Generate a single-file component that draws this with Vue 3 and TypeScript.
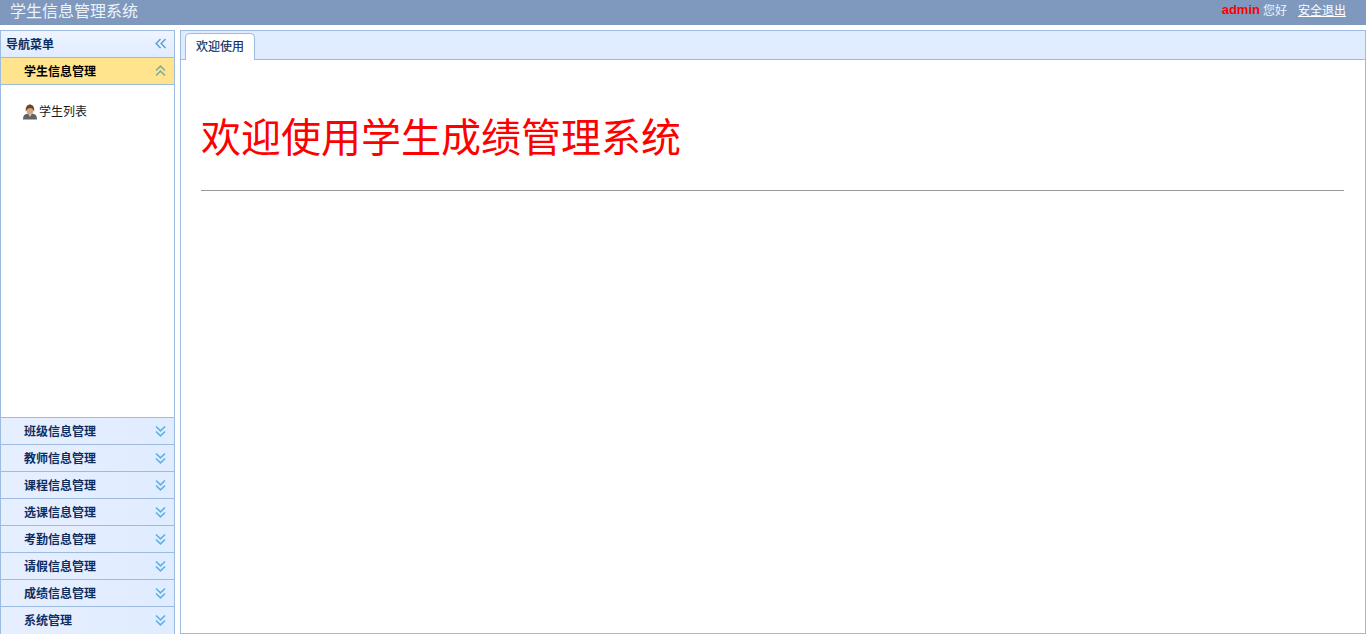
<script setup lang="ts">
const collapsed: string[] = ['班级信息管理', '教师信息管理', '课程信息管理', '选课信息管理', '考勤信息管理', '请假信息管理', '成绩信息管理', '系统管理']
</script>

<template>
  <div class="page">
    <header class="top">
      <div class="brand">学生信息管理系统</div>
      <div class="user">
        <b class="name">admin</b>
        <span class="hello">您好</span>
        <a class="logout">安全退出</a>
      </div>
    </header>
    <div class="main">
      <aside class="side">
        <div class="side-title">
          <span class="label">导航菜单</span>
          <svg class="chev" width="12" height="12" viewBox="0 0 12 12"><path d="M5.500 1 1.200 5.500l4.300 4.500M10.500 1 6.200 5.500l4.300 4.500" fill="none" stroke="#5fa3d8" stroke-width="1.600"/></svg>
        </div>
        <div class="acc-head open">
          <span class="label">学生信息管理</span>
          <svg class="chev" width="12" height="12" viewBox="0 0 12 12"><path d="M1 5.500 5.500 1.200 10 5.500M1 10.500 5.500 6.200 10 10.500" fill="none" stroke="#7fae9c" stroke-width="1.600"/></svg>
        </div>
        <div class="acc-body">
          <div class="leaf">
            <svg width="16" height="16" viewBox="0 0 16 16">
              <path d="M1 15.500c0-4.500 2-6 7-6s7 1.500 7 6z" fill="#5f6266"/>
              <path d="M6 9.500l2 3.500 2-3.500z" fill="#cfc9bf"/>
              <ellipse cx="8" cy="6" rx="3.600" ry="3.900" fill="#d6a57a"/>
              <path d="M3.800 7.500C3.200 2.500 6 .6 8 .6s4.800 1.900 4.200 6.900C11.300 5 9.500 4 8 4S4.700 5 3.800 7.500z" fill="#6b4526"/>
            </svg>
            <span class="label">学生列表</span>
          </div>
        </div>
        <div v-for="item in collapsed" :key="item" class="acc-head">
          <span class="label">{{ item }}</span>
          <svg class="chev" width="12" height="12" viewBox="0 0 12 12"><path d="M1 1.500 5.500 5.800 10 1.500M1 6.500l4.500 4.300L10 6.500" fill="none" stroke="#5fb0e0" stroke-width="1.600"/></svg>
        </div>
      </aside>
      <section class="content">
        <div class="tabs">
          <div class="tab"><span class="label">欢迎使用</span></div>
        </div>
        <div class="tab-body">
          <h1>欢迎使用学生成绩管理系统</h1>
          <hr />
        </div>
      </section>
    </div>
  </div>
</template>

<style>
html, body { margin: 0; padding: 0; background: #fff; overflow: hidden; }
</style>

<style scoped>
.page {
  height: 634px;
  display: flex;
  flex-direction: column;
  font-family: "Noto Sans CJK SC", "Liberation Sans", sans-serif;
  font-size: 12px;
  background: #fff;
}
.label { display: block; line-height: 16px; margin-top: -3px; }
.side-title .label, .acc-head .label { margin-top: -1px; }
.tab .label { margin-top: -2px; }
.top {
  height: 25px;
  flex: none;
  background: #7f99be;
  display: flex;
  justify-content: space-between;
  align-items: flex-start;
  padding: 0 20px 0 10px;
  color: #fff;
}
.brand { font-size: 16px; line-height: 20px; color: #eef3fa; }
.user { display: flex; align-items: center; line-height: 20px; }
.name { color: #f00; font-family: "Liberation Sans", sans-serif; font-size: 13px; }
.hello { margin-left: 3px; color: #eef3fa; }
.logout { margin-left: 11px; text-decoration: underline; color: #fff; }
.main {
  flex: 1;
  min-height: 0;
  display: flex;
  gap: 5px;
  padding-top: 5px;
}
.side {
  width: 175px;
  flex: none;
  box-sizing: border-box;
  border: 1px solid #9dbae0;
  border-bottom: 0;
  display: flex;
  flex-direction: column;
}
.side-title {
  height: 26px;
  flex: none;
  box-sizing: border-box;
  display: flex;
  align-items: center;
  justify-content: space-between;
  padding: 0 7px 0 5px;
  font-weight: 700;
  color: #0e2d5f;
  background: linear-gradient(#eff5ff, #e0ecff);
}
.acc-head {
  height: 27px;
  flex: none;
  box-sizing: border-box;
  display: flex;
  align-items: center;
  justify-content: space-between;
  padding: 0 7px 0 23px;
  font-weight: 700;
  color: #0e2d5f;
  background: linear-gradient(to right, #e6efff, #e0ecff);
  border-top: 1px solid #9dbae0;
}
.acc-head:last-child {
  height: 28px;
  padding-bottom: 1px;
}
.acc-head.open {
  background: #ffe48d;
  color: #000;
  border-bottom: 1px solid #9dbae0;
  height: 28px;
}
.acc-body {
  flex: 1;
  min-height: 0;
  padding: 18px 0 0 21px;
  background: #fff;
}
.leaf {
  display: flex;
  align-items: center;
  gap: 1px;
  height: 18px;
  color: #1a1a1a;
}
.content {
  flex: 1;
  min-width: 0;
  box-sizing: border-box;
  border: 1px solid #9dbae0;
  display: flex;
  flex-direction: column;
}
.tabs {
  height: 29px;
  flex: none;
  box-sizing: border-box;
  padding: 2px 0 0 4px;
  background: #e0ecff;
  border-bottom: 1px solid #9dbae0;
  display: flex;
}
.tab {
  width: 70px;
  height: 27px;
  box-sizing: border-box;
  background: #fff;
  border: 1px solid #9dbae0;
  border-bottom: 0;
  border-radius: 5px 5px 0 0;
  display: flex;
  align-items: center;
  justify-content: center;
  color: #0e2d5f;
  -webkit-text-stroke: 0.2px #0e2d5f;
}
.tab-body {
  flex: 1;
  padding: 0 21px 0 20px;
  background: #fff;
}
h1 {
  margin: 48px 0 0;
  font-size: 40px;
  line-height: 54px;
  font-weight: 400;
  color: #f00;
}
hr {
  margin: 28px 0 0;
  height: 1px;
  border: 0;
  background: #999;
}
</style>
